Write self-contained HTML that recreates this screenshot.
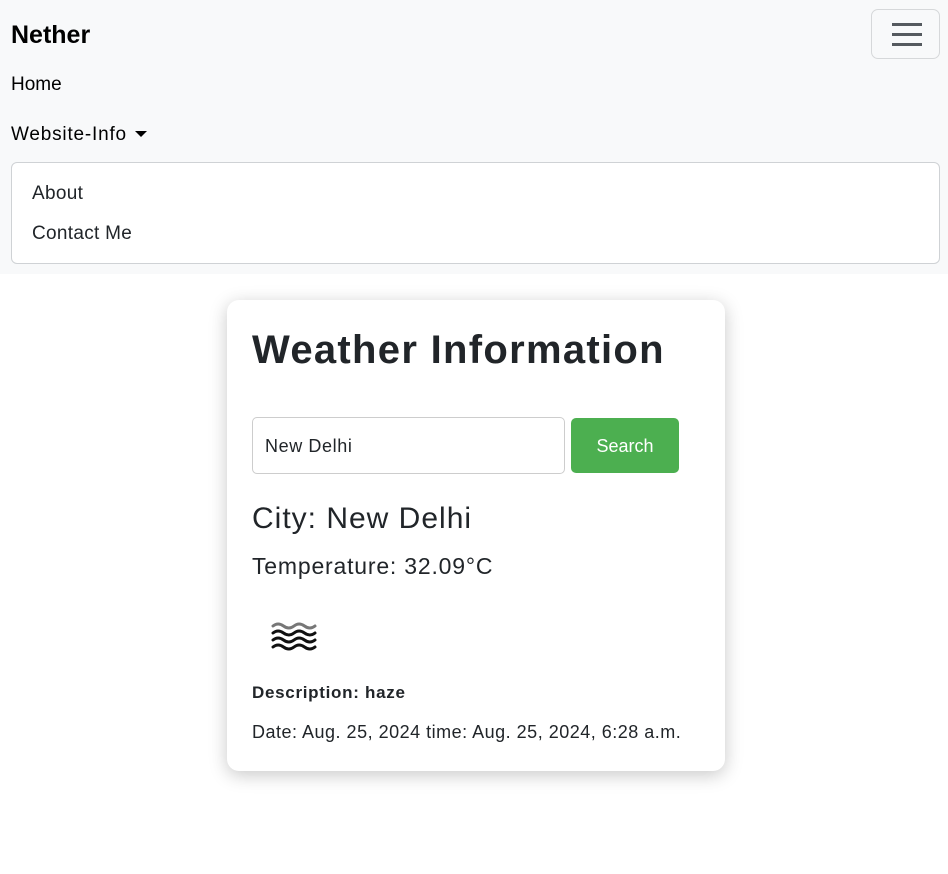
<!DOCTYPE html>
<html><head><meta charset="utf-8"><style>
*{box-sizing:border-box;margin:0;padding:0}
body{width:948px;height:874px;background:#fff;font-family:"Liberation Sans",sans-serif;color:#212529;position:relative;overflow:hidden}
nav{position:absolute;left:0;top:0;width:948px;height:274px;background:#f8f9fa}
.t{position:absolute;white-space:nowrap}
.brand{left:11px;top:21px;font-size:25px;font-weight:bold;color:#000}
.home{left:11px;top:74px;font-size:19px;color:#000}
.wi{left:11px;top:124px;font-size:19px;color:#000;letter-spacing:0.8px}
.caret{position:absolute;left:135px;top:131px;width:0;height:0;border-left:6px solid transparent;border-right:6px solid transparent;border-top:6px solid #000}
.dd{position:absolute;left:11px;top:162px;width:929px;height:102px;background:#fff;border:1px solid #cfd2d5;border-radius:6px}
.tog{position:absolute;left:871px;top:9px;width:69px;height:50px;border:1px solid #d6d8da;border-radius:7px}
.tog i{position:absolute;left:20px;width:30px;height:3px;background:#555a5f}
.card{position:absolute;left:227px;top:300px;width:498px;height:471px;background:#fff;border-radius:12px;box-shadow:0 4px 18px rgba(0,0,0,.22)}
.inp{position:absolute;left:252px;top:417px;width:313px;height:57px;border:1px solid #cdcdcd;border-radius:5px}
.btn{position:absolute;left:571px;top:418px;width:108px;height:55px;background:#4caf50;border-radius:5px;color:#fff;font-size:18px;text-align:center;line-height:57px}
</style></head><body>
<nav>
<div class="t brand">Nether</div>
<div class="t home">Home</div>
<div class="t wi">Website-Info</div><div class="caret"></div>
<div class="dd"></div>
<div class="t" style="left:32px;top:183px;font-size:19px;letter-spacing:0.3px">About</div>
<div class="t" style="left:32px;top:223px;font-size:19px;letter-spacing:0.3px">Contact Me</div>
<div class="tog"><i style="top:13px"></i><i style="top:23px"></i><i style="top:33px"></i></div>
</nav>
<div class="card"></div>
<div class="t" style="left:252px;top:328px;font-size:40px;font-weight:bold;letter-spacing:1.3px">Weather Information</div>
<div class="inp"></div>
<div class="t" style="left:265px;top:436px;font-size:18px;letter-spacing:0.6px">New Delhi</div>
<div class="btn">Search</div>
<div class="t" style="left:252px;top:502px;font-size:30px;letter-spacing:1px">City: New Delhi</div>
<div class="t" style="left:252px;top:553px;font-size:23px;letter-spacing:0.8px">Temperature: 32.09°C</div>
<svg style="position:absolute;left:270px;top:620px" width="48" height="34" viewBox="0 0 48 34">
<g fill="none" stroke="#111" stroke-width="3" stroke-linecap="round">
<path d="M3 6 q5 -4 10.5 0 t10.5 0 t10.5 0 t10.5 0" stroke="#777"/>
<path d="M3 13 q5 -4 10.5 0 t10.5 0 t10.5 0 t10.5 0"/>
<path d="M3 20 q5 -4 10.5 0 t10.5 0 t10.5 0 t10.5 0"/>
<path d="M3 27 q5 -4 10.5 0 t10.5 0 t10.5 0 t10.5 0"/>
</g></svg>
<div class="t" style="left:252px;top:683px;font-size:17px;font-weight:bold;letter-spacing:0.7px">Description: haze</div>
<div class="t" style="left:252px;top:722px;font-size:18px;letter-spacing:0.5px">Date: Aug. 25, 2024 time: Aug. 25, 2024, 6:28 a.m.</div>
</body></html>
